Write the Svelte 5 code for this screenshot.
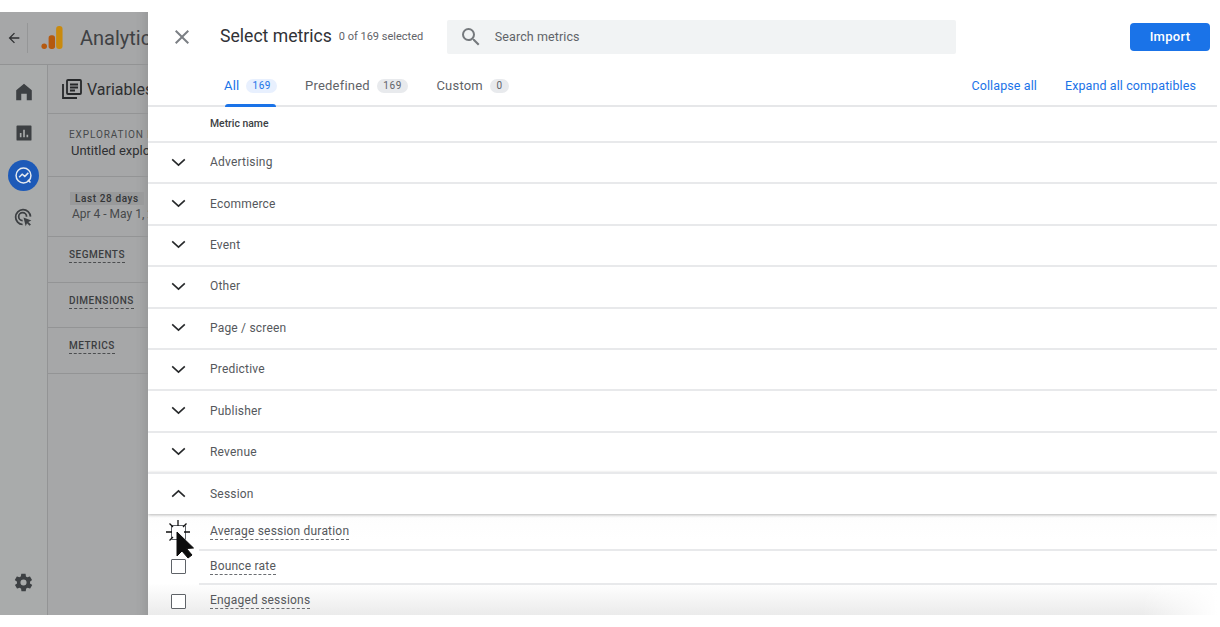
<script>
  const groups = ["Advertising", "Ecommerce", "Event", "Other", "Page / screen", "Predictive", "Publisher", "Revenue"];
  const metrics = ["Average session duration", "Bounce rate", "Engaged sessions"];
</script>

<div class="page">
  <!-- greyed out app behind the panel -->
  <aside class="app">
    <div class="topbar">
      <svg class="back" viewBox="0 0 24 24" width="16" height="16"><path d="M20 11H7.800l5.600-5.600L12 4l-8 8 8 8 1.400-1.400L7.800 13H20z" fill="#2e2f31"/></svg>
      <span class="sep"></span>
      <svg class="logo" viewBox="0 0 24 26" width="22" height="26">
        <rect x="16.500" y="0" width="7" height="25" rx="3.300" fill="#c98a0e"/>
        <rect x="8.300" y="10" width="7" height="15" rx="3" fill="#b5590f"/>
        <circle cx="3.500" cy="22" r="3" fill="#b5590f"/>
      </svg>
      <span class="brand">Analytics</span>
    </div>
    <div class="app-body">
      <nav class="rail">
        <svg viewBox="0 0 24 24" width="22" height="22"><path d="M12 3 3.500 10v11H9v-7h6v7h5.500V10z" fill="#3d4043"/></svg>
        <svg viewBox="0 0 24 24" width="20" height="20"><path d="M4 3h16a1 1 0 0 1 1 1v16a1 1 0 0 1-1 1H4a1 1 0 0 1-1-1V4a1 1 0 0 1 1-1zm3 9v5h2v-5zm4-4v9h2V8zm4 6v3h2v-3z" fill="#3d4043" fill-rule="evenodd"/></svg>
        <span class="rail-on">
          <svg viewBox="0 0 24 24" width="21" height="21" fill="none" stroke="#e4e9ef" stroke-width="1.700"><circle cx="12" cy="12" r="8.500"/><path d="m7 14 3.500-3.500 3 2.500L17.500 9"/><path d="M17 17l3 3"/></svg>
        </span>
        <svg viewBox="0 0 24 24" width="21" height="21" fill="none" stroke="#3d4043" stroke-width="2"><path d="M11 20a8.500 8.500 0 1 1 9-9"/><path d="M11 15.500a4.500 4.500 0 1 1 4.500-4.500"/><path d="m12 12 9 3.500-3.500 1.500 3 3-1.500 1.500-3-3-1.500 3.500z" fill="#3d4043" stroke="none"/></svg>
        <svg class="gear" viewBox="0 0 24 24" width="21" height="21"><path d="M19.400 13c0-.3.100-.6.100-1s0-.7-.1-1l2.100-1.600c.2-.2.200-.4.100-.6l-2-3.500c-.1-.2-.4-.3-.6-.2l-2.500 1c-.5-.4-1.100-.7-1.700-1l-.4-2.700c0-.2-.2-.4-.5-.4h-4c-.2 0-.5.200-.5.400l-.4 2.700c-.6.200-1.200.6-1.700 1l-2.500-1c-.2-.1-.5 0-.6.200l-2 3.500c-.1.200 0 .5.100.6L4.600 11c0 .3-.1.700-.1 1s0 .7.100 1l-2.100 1.600c-.2.200-.2.400-.1.600l2 3.500c.1.200.4.300.6.200l2.500-1c.5.400 1.100.7 1.700 1l.4 2.700c0 .2.200.4.500.4h4c.2 0 .5-.2.500-.4l.4-2.700c.6-.2 1.200-.6 1.700-1l2.500 1c.2.100.5 0 .6-.2l2-3.500c.1-.2.100-.5-.1-.6zM12 15.500a3.500 3.500 0 1 1 0-7 3.500 3.500 0 0 1 0 7z" fill="#3d4043"/></svg>
      </nav>
      <div class="vars">
        <div class="vars-head">
          <svg viewBox="0 0 24 24" width="24" height="24" fill="none" stroke="#26282a" stroke-width="1.800"><rect x="7" y="3" width="14" height="14" rx="1"/><path d="M3 7v14h14M10 7.500h8M10 10.500h8M10 13.500h5"/></svg>
          <span>Variables</span>
        </div>
        <div class="vars-name">
          <div class="cap">EXPLORATION NAME</div>
          <div class="val">Untitled exploration</div>
        </div>
        <div class="vars-date">
          <span class="chip">Last 28 days</span>
          <div class="range">Apr 4 - May 1, 2022</div>
        </div>
        <div class="vars-sec"><span>SEGMENTS</span></div>
        <div class="vars-sec"><span>DIMENSIONS</span></div>
        <div class="vars-sec"><span>METRICS</span></div>
      </div>
    </div>
  </aside>

  <main class="panel">
    <header class="head">
      <svg class="close" viewBox="0 0 24 24" width="24" height="24"><path d="M19 6.400 17.600 5 12 10.600 6.400 5 5 6.400 10.600 12 5 17.600 6.400 19 12 13.400 17.600 19 19 17.600 13.400 12z" fill="#7b7f84"/></svg>
      <h1>Select metrics</h1>
      <span class="count">0 of 169 selected</span>
      <div class="search">
        <svg viewBox="0 0 24 24" width="24" height="24"><path d="M15.500 14h-.79l-.28-.27A6.470 6.470 0 0 0 16 9.500 6.500 6.500 0 1 0 9.500 16c1.610 0 3.090-.59 4.230-1.570l.27.28v.79l5 4.990L20.490 19l-4.990-5zm-6 0C7.010 14 5 11.990 5 9.500S7.010 5 9.500 5 14 7.010 14 9.500 11.990 14 9.500 14z" fill="#75797d"/></svg>
        <span>Search metrics</span>
      </div>
      <button class="import">Import</button>
    </header>

    <div class="tabs">
      <div class="tab on">All <span class="pill blue">169</span></div>
      <div class="tab">Predefined <span class="pill">169</span></div>
      <div class="tab">Custom <span class="pill">0</span></div>
      <div class="links">
        <span>Collapse all</span>
        <span>Expand all compatibles</span>
      </div>
    </div>

    <div class="col-head">Metric name</div>

    {#each groups as g}
      <div class="group">
        <svg viewBox="0 0 16 10" width="15" height="9"><path d="M1 1.500 8 8l7-6.500" fill="none" stroke="#26282a" stroke-width="1.800"/></svg>
        <span>{g}</span>
      </div>
    {/each}
    <div class="group open">
      <svg viewBox="0 0 16 10" width="15" height="9"><path d="M1 8.500 8 2l7 6.500" fill="none" stroke="#26282a" stroke-width="1.800"/></svg>
      <span>Session</span>
    </div>

    <div class="metrics">
      {#each metrics as m}
        <div class="metric">
          <span class="box"></span>
          <span class="label">{m}</span>
        </div>
      {/each}
    </div>

    <!-- recording cursor with click burst -->
    <svg class="cursor" viewBox="0 0 30 40" width="30" height="40">
      <g stroke="#111" stroke-width="1.300">
        <path d="M12 0v6M0 12h6M18 12h6M3.500 3.500 7 7M20.500 3.500 17 7M3.500 20.500 7 17"/>
      </g>
      <path d="M11 12v24l5-5 6 7 4-3-5.500-6.500 7-.5z" fill="#0c0c0c" stroke="#0c0c0c" stroke-linejoin="round"/>
    </svg>
  </main>
</div>

<style>
  :global(body) {
    margin: 0;
    background: #fff;
    font-family: Roboto, "Liberation Sans", sans-serif;
  }

  .page {
    display: flex;
    width: 1217px;
    height: 615px;
    overflow: hidden;
    align-items: stretch;
  }

  /* Left app, dimmed */
  .app {
    width: 148px;
    flex: none;
    margin-top: 12px;
    background: #a6a7a8;
    overflow: hidden;
    box-shadow: inset -14px 0 12px -12px rgba(0, 0, 0, 0.12);
    color: #2e2f31;
  }
  .topbar {
    display: flex;
    align-items: center;
    height: 52px;
    border-bottom: 1px solid #929394;
    white-space: nowrap;
    padding-left: 6px;
  }
  .sep {
    width: 1px;
    height: 30px;
    background: #959697;
    margin: 0 13px 0 5px;
    flex: none;
  }
  .logo { margin-right: 17px; flex: none; }
  .back { flex: none; }
  .brand { font-size: 20px; color: #3f4144; }

  .app-body { display: flex; height: 551px; }
  .rail {
    width: 47px;
    flex: none;
    background: #a9abab;
    border-right: 1px solid #939495;
    display: flex;
    flex-direction: column;
    align-items: center;
    padding-top: 16px;
  }
  .rail svg { flex: none; }
  .rail > svg:nth-child(2) { margin-top: 20px; }
  .rail-on {
    width: 31px;
    height: 31px;
    border-radius: 50%;
    background: #1d5ab8;
    display: flex;
    align-items: center;
    justify-content: center;
    margin: 17px 0 16px;
  }
  .rail .gear { margin-top: auto; margin-bottom: 23px; }

  .vars { flex: 1; min-width: 0; white-space: nowrap; }
  .vars-head {
    display: flex;
    align-items: center;
    gap: 3px;
    height: 48px;
    padding-left: 12px;
    font-size: 16px;
    border-bottom: 1px solid #939495;
  }
  .vars-head svg { flex: none; }
  .vars-name {
    height: 63px;
    padding: 15px 0 0 21px;
    box-sizing: border-box;
    border-bottom: 1px solid #939495;
  }
  .cap { font-size: 10px; letter-spacing: 0.9px; color: #47494b; }
  .val { font-size: 13px; margin: 3px 0 0 2px; color: #2e2f31; }
  .vars-date {
    height: 60px;
    padding: 10px 0 0 21px;
    box-sizing: border-box;
    border-bottom: 1px solid #939495;
  }
  .chip {
    display: inline-block;
    font-size: 10px;
    font-weight: 500;
    letter-spacing: 0.6px;
    background: #999a9b;
    padding: 1px 5px;
    margin-left: 1px;
    color: #333537;
  }
  .range { font-size: 12px; margin: 1px 0 0 3px; color: #47494b; }
  .vars-sec {
    height: 45.500px;
    padding: 12px 0 0 21px;
    box-sizing: border-box;
    border-bottom: 1px solid #939495;
    font-size: 10px;
    font-weight: 500;
    letter-spacing: 0.5px;
    color: #3b3d3f;
  }
  .vars-sec span {
    border-bottom: 1px dashed #4b4d4f;
    padding-bottom: 2px;
  }

  /* Right panel */
  .panel {
    position: relative;
    flex: 1;
    min-width: 0;
    background: #fff;
    color: #3c4043;
    overflow: hidden;
  }
  .head {
    display: flex;
    align-items: center;
    height: 31px;
    padding: 21px 7px 1px 22px;
  }
  .close { flex: none; }
  h1 {
    margin: 0 0 0 26px;
    font-size: 17.600px;
    font-weight: 400;
    color: #303236;
    line-height: 1;
  }
  .count {
    font-size: 11px;
    color: #5f6368;
    margin-left: 7px;
    width: 108px;
    flex: none;
    white-space: nowrap;
  }
  .search {
    display: flex;
    align-items: center;
    gap: 12px;
    width: 509px;
    height: 34px;
    flex: none;
    padding-left: 12px;
    box-sizing: border-box;
    background: #f1f3f4;
    border-radius: 2px;
    font-size: 12.500px;
    color: #5f6368;
    letter-spacing: 0.1px;
  }
  .import {
    margin-left: auto;
    width: 80px;
    height: 28px;
    border: none;
    border-radius: 4px;
    background: #1a73e8;
    color: #fff;
    font: 500 13px Roboto, sans-serif;
    letter-spacing: 0.3px;
    padding: 0;
  }

  .tabs {
    display: flex;
    align-items: center;
    height: 40px;
    padding: 12px 0 0 76px;
    border-bottom: 2px solid #e6e7e9;
    font-size: 13px;
    letter-spacing: 0.2px;
    gap: 28px;
    color: #5f6368;
    white-space: nowrap;
  }
  .tab {
    position: relative;
    display: flex;
    align-items: center;
    gap: 7px;
    height: 100%;
  }
  .tab.on { color: #1a73e8; }
  .tab.on::after {
    content: "";
    position: absolute;
    left: 1px;
    bottom: -2px;
    width: 51px;
    height: 3px;
    border-radius: 3px 3px 0 0;
    background: #1a73e8;
  }
  .pill {
    font-size: 10px;
    letter-spacing: 0.6px;
    line-height: 14px;
    padding: 0 6.500px;
    margin-top: 1px;
    border-radius: 7px;
    background: #e8eaed;
    color: #5f6368;
  }
  .pill.blue { background: #e8f0fe; color: #1a73e8; padding: 0 6px; }
  .links {
    display: flex;
    gap: 28px;
    margin-left: auto;
    padding-right: 21px;
    font-size: 12.500px;
    letter-spacing: 0.1px;
    color: #1a73e8;
  }

  .col-head {
    height: 34px;
    line-height: 34px;
    padding-left: 62px;
    font-size: 10.400px;
    font-weight: 500;
    color: #3c4043;
    box-sizing: border-box;
  }

  .group {
    display: flex;
    align-items: center;
    height: 41.400px;
    padding: 0 0 1px 23px;
    box-sizing: border-box;
    border-top: 2px solid #e8e9eb;
    font-size: 12px;
    letter-spacing: 0.2px;
    color: #55585c;
  }
  .group svg { flex: none; margin-right: 24px; }
  .group.open {
    position: relative;
    height: 42px;
    box-shadow: 0 1px 3px rgba(0, 0, 0, 0.28);
  }

  .metrics {
    background: linear-gradient(#fdfdfd, #fff 25%);
  }
  .metric {
    position: relative;
    display: flex;
    align-items: center;
    height: 34.500px;
    padding: 2px 0 0 23px;
    box-sizing: border-box;
    font-size: 12px;
    letter-spacing: 0.2px;
    color: #55585c;
  }
  .metric:nth-child(3) {
    background: linear-gradient(to right, transparent 93%, #fff), linear-gradient(#fff, #e9e9e9);
  }
  .metric + .metric::before {
    content: "";
    position: absolute;
    left: 51px;
    right: 0;
    top: 0;
    height: 2px;
    background: #e8e9eb;
  }
  .box {
    width: 15px;
    height: 15px;
    flex: none;
    margin-right: 24px;
    border: 1.500px solid #5f6368;
    border-radius: 1px;
    box-sizing: border-box;
    background: #fff;
  }
  .label {
    border-bottom: 1px dashed #6a6d71;
    padding-bottom: 1px;
  }

  .cursor {
    position: absolute;
    left: 18px;
    top: 520px;
  }
</style>
